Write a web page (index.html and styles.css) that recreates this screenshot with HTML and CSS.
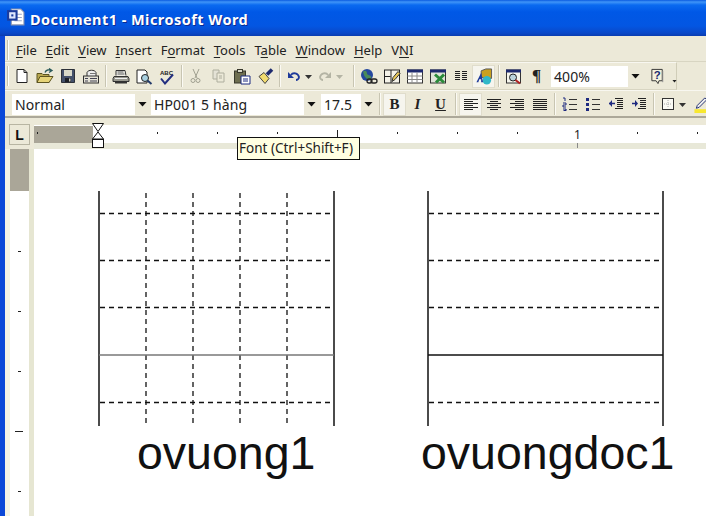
FILE: index.html
```html
<!DOCTYPE html>
<html lang="en">
<head>
<meta charset="utf-8">
<title>Document1 - Microsoft Word</title>
<link rel="stylesheet" href="styles.css">
</head>
<body>
<div class="window">
  <header class="titlebar">
    <svg class="appicon" viewBox="0 0 18 18"><path d="M5 1h9l3 3v12H5z" fill="#fff" stroke="#8a94b0"/><path d="M8 6h7M8 9h7M8 12h7" stroke="#9aa6c8"/><rect x="1" y="2" width="10" height="10" fill="#1c3c9c"/><rect x="3" y="4" width="6" height="6" fill="#dfe8ff"/><rect x="5" y="6" width="2" height="2" fill="#1c3c9c"/></svg>
    <span class="title">Document1 - Microsoft Word</span>
  </header>
  <div class="frame">
    <nav class="menubar">
      <span class="grip"></span>
      <span class="menu"><u>F</u>ile</span>
      <span class="menu"><u>E</u>dit</span>
      <span class="menu"><u>V</u>iew</span>
      <span class="menu"><u>I</u>nsert</span>
      <span class="menu">F<u>o</u>rmat</span>
      <span class="menu"><u>T</u>ools</span>
      <span class="menu">T<u>a</u>ble</span>
      <span class="menu"><u>W</u>indow</span>
      <span class="menu"><u>H</u>elp</span>
      <span class="menu">V<u>N</u>I</span>
    </nav>
    <div class="toolbar standard">
      <span class="grip"></span>
      <span class="btn"><svg class="ico" viewBox="0 0 16 16"><path d="M3 1.500h7l3 3v10H3z" fill="#fff" stroke="#222"/><path d="M10 1.500v3h3" fill="none" stroke="#222"/></svg></span>
      <span class="btn"><svg class="ico wide" viewBox="0 0 18 16"><path d="M1 14V5h5l1 1h6v8z" fill="#b8a850" stroke="#5c5420"/><path d="M1 14l3-6h13l-4 6z" fill="#e6d478" stroke="#5c5420"/><path d="M9 4c1-3 4-3 6-2M13 0l3 2-3 2" fill="none" stroke="#2a5a5a" stroke-width="1.300"/></svg></span>
      <span class="btn"><svg class="ico" viewBox="0 0 16 16"><path d="M1.500 1.500h13v13h-13z" fill="#43506a" stroke="#2c3038"/><rect x="4" y="2" width="8" height="6" fill="#d8d8c8"/><rect x="5" y="10" width="6" height="4" fill="#1c2028"/><rect x="9" y="10.500" width="1.500" height="3" fill="#c8c8b8"/></svg></span>
      <span class="btn"><svg class="ico wide" viewBox="0 0 18 16"><path d="M5 8V4c1-3 8-3 9 0v4" fill="#eee" stroke="#333"/><path d="M8 5h6" stroke="#777"/><rect x="1.500" y="7.500" width="15" height="7" fill="#e4e2d6" stroke="#333"/><path d="M3 10h3M3 12.500h3M8 10h7M8 12.500h7" stroke="#445"/></svg></span>
      <span class="sep"></span>
      <span class="btn"><svg class="ico wide" viewBox="0 0 18 16"><path d="M4 7V2h9l1 5" fill="#f4f4ee" stroke="#333"/><path d="M5.500 3.500h6M5.500 5.500h7" stroke="#555"/><path d="M2 8h14l1 2v3H1v-3z" fill="#9a9a90" stroke="#333"/><path d="M3 14h12" stroke="#333" stroke-width="2"/><path d="M3 10h12" stroke="#eee"/></svg></span>
      <span class="btn"><svg class="ico wide" viewBox="0 0 18 16"><path d="M2 1.500h8l2 2v11H2z" fill="#fff" stroke="#222"/><circle cx="10" cy="9.500" r="3.500" fill="#a8d0e0" stroke="#222"/><path d="M12.500 12l4 3.500" stroke="#233a6a" stroke-width="2"/></svg></span>
      <span class="btn"><svg class="ico wide" viewBox="0 0 18 16"><text class="abc" x="2" y="6">ABC</text><path d="M3 10l4 5 8-9" fill="none" stroke="#232f80" stroke-width="2"/></svg></span>
      <span class="sep tight"></span>
      <span class="btn"><svg class="ico" viewBox="0 0 16 16"><path d="M5 1l4 9M11 1l-4 9" stroke="#a0a090" fill="none"/><circle cx="5" cy="12.500" r="2" fill="none" stroke="#a0a090"/><circle cx="10" cy="12.500" r="2" fill="none" stroke="#a0a090"/></svg></span>
      <span class="btn"><svg class="ico" viewBox="0 0 16 16"><path d="M2 2h6v9H2z" fill="#e4e2d6" stroke="#aeae9e"/><path d="M6 5h7v9H6z" fill="#ece9d8" stroke="#aeae9e"/><path d="M8 8h3M8 10h3" stroke="#aeae9e"/></svg></span>
      <span class="btn"><svg class="ico wide" viewBox="0 0 18 16"><rect x="1.500" y="2.500" width="11" height="12" fill="#6e6e50" stroke="#38382c"/><rect x="4.500" y="1" width="5" height="3" fill="#d8d8c8" stroke="#38382c"/><path d="M8 7.500h9v8H8z" fill="#fff" stroke="#1a2a80"/><path d="M10 10.500h5M10 12.500h5" stroke="#1a2a80"/></svg></span>
      <span class="btn"><svg class="ico wide" viewBox="0 0 18 16"><path d="M3 8l5-4 5 6-4 5z" fill="#f2dc70" stroke="#444"/><path d="M11 6l5-5" stroke="#1d2a6e" stroke-width="3.500"/></svg></span>
      <span class="sep"></span>
      <span class="btn slim"><svg class="ico" viewBox="0 0 16 16"><path d="M5 7C7 4 12 5 13 9c0 2-2 3-3 3" fill="none" stroke="#1e3a9a" stroke-width="1.800"/><path d="M2 4v6h6z" fill="#1e3a9a"/></svg></span>
      <span class="dd undo-dd"></span>
      <span class="btn slim"><svg class="ico" viewBox="0 0 16 16"><path d="M11 7C9 4 4 5 3 9c0 2 2 3 3 3" fill="none" stroke="#b4b4a4" stroke-width="1.800"/><path d="M14 4v6H8z" fill="#b4b4a4"/></svg></span>
      <span class="dd off"></span>
      <span class="sep"></span>
      <span class="btn"><svg class="ico wide" viewBox="0 0 18 16"><circle cx="7" cy="6.500" r="6" fill="#24489e"/><path d="M3 3c3-2 4 0 4 2s3 1 4 3-2 4-3 3-4-2-5-8z" fill="#4a8a5a"/><rect x="7" y="10.500" width="5" height="4" rx="2" fill="none" stroke="#222" stroke-width="1.300"/><rect x="11" y="10.500" width="6" height="4" rx="2" fill="none" stroke="#222" stroke-width="1.300"/></svg></span>
      <span class="btn"><svg class="ico wide" viewBox="0 0 18 16"><rect x="1.500" y="1.500" width="15" height="13" fill="#f4f2e8" stroke="#222"/><path d="M8 1.500v13M1.500 8h6" stroke="#222"/><path d="M9 13l1-4 5-6 2 2-5 6z" fill="#e8c858" stroke="#333"/></svg></span>
      <span class="btn"><svg class="ico wide" viewBox="0 0 18 16"><rect x="1.500" y="1.500" width="15" height="13" fill="#fff" stroke="#333"/><rect x="1" y="1" width="16" height="3" fill="#1e2a70"/><path d="M1.500 7.500h15M1.500 11h15M6 4v10M11 4v10" stroke="#8a8a8a"/></svg></span>
      <span class="btn"><svg class="ico wide" viewBox="0 0 18 16"><rect x="1.500" y="1.500" width="15" height="13" fill="#dfe4d8" stroke="#333"/><rect x="1" y="1" width="16" height="3" fill="#1e2a70"/><path d="M6 6l9 8M15 6l-8 8" stroke="#2a8a3a" stroke-width="3"/></svg></span>
      <span class="btn"><svg class="ico" viewBox="0 0 16 16"><path d="M2 3.500h5M2 5.500h5M2 7.500h5M2 9.500h5M2 11.500h5M9 3.500h5M9 5.500h5M9 7.500h5M9 9.500h5M9 11.500h5" stroke="#222"/></svg></span>
      <span class="btn active"><svg class="ico wide" viewBox="0 0 18 18"><path d="M6 3l5-2h6v10h-8l-3-2z" fill="#c8a020" stroke="#555"/><circle cx="12" cy="13" r="4.500" fill="#30b8c8"/><path d="M1 15L6 5l2 10H6v-3H4l-1 3z" fill="#1e3a9a"/></svg></span>
      <span class="sep"></span>
      <span class="btn"><svg class="ico wide" viewBox="0 0 18 16"><rect x="1.500" y="1.500" width="14" height="13" fill="#f4f4ec" stroke="#333"/><rect x="1" y="1" width="15" height="3" fill="#1e2a70"/><circle cx="8" cy="9" r="3.500" fill="#bcd4dc" stroke="#222"/><path d="M10.500 11.500l4.500 3.500" stroke="#b02020" stroke-width="2"/></svg></span>
      <span class="btn"><span class="pilcrow">¶</span></span>
      <span class="combo zoom"><span class="combo-text">400%</span><span class="arrow"></span></span>
      <span class="btn help-btn"><svg class="ico wide" viewBox="0 0 18 18"><path d="M2.500 1.500h11v12H10l-1 3-2-3H2.500z" fill="#f4f2de" stroke="#333"/><path d="M14 3v12" stroke="#888"/><text class="q" x="4.500" y="11.500">?</text></svg></span>
      <span class="chevron"></span>
    </div>
    <div class="toolbar formatting">
      <span class="combo style"><span class="combo-text">Normal</span><span class="arrow"></span></span>
      <span class="combo font"><span class="combo-text">HP001 5 hàng</span><span class="arrow"></span></span>
      <span class="combo size"><span class="combo-text">17.5</span><span class="arrow"></span></span>
      <span class="sep"></span>
      <span class="btn active fmt bold">B</span>
      <span class="btn fmt italic">I</span>
      <span class="btn fmt under">U</span>
      <span class="sep"></span>
      <span class="btn active"><svg class="ico" viewBox="0 0 16 16"><path d="M1 3.500h14M1 5.500h9M1 7.500h14M1 9.500h9M1 11.500h14M1 13.500h9" stroke="#222"/></svg></span>
      <span class="btn"><svg class="ico" viewBox="0 0 16 16"><path d="M1 3.500h14M4 5.500h8M1 7.500h14M4 9.500h8M1 11.500h14M4 13.500h8" stroke="#222"/></svg></span>
      <span class="btn"><svg class="ico" viewBox="0 0 16 16"><path d="M1 3.500h14M6 5.500h9M1 7.500h14M6 9.500h9M1 11.500h14M6 13.500h9" stroke="#222"/></svg></span>
      <span class="btn"><svg class="ico" viewBox="0 0 16 16"><path d="M1 3.500h14M1 5.500h14M1 7.500h14M1 9.500h14M1 11.500h14M1 13.500h14" stroke="#222"/></svg></span>
      <span class="sep"></span>
      <span class="btn"><svg class="ico" viewBox="0 0 16 16"><path d="M1 2h2v3M1 7h3v2H1v2h3M1 13h3v1.500H1.500M4 14.500v-1" fill="none" stroke="#1e2a80"/><path d="M7 3.500h8M7 8.500h8M7 13.500h8" stroke="#333"/></svg></span>
      <span class="btn"><svg class="ico" viewBox="0 0 16 16"><path d="M1 2h3v3H1zM1 7h3v3H1zM1 12h3v3H1z" fill="#1e2a80"/><path d="M7 3.500h8M7 8.500h8M7 13.500h8" stroke="#333"/></svg></span>
      <span class="btn"><svg class="ico" viewBox="0 0 16 16"><path d="M7 2.500h8M9 4.500h6M9 6.500h6M9 8.500h6M9 10.500h6M7 12.500h8" stroke="#222"/><path d="M1 7.500h6" stroke="#1e2a80" stroke-width="1.500"/><path d="M4 4L1 7.500 4 11z" fill="#1e2a80"/></svg></span>
      <span class="btn"><svg class="ico" viewBox="0 0 16 16"><path d="M7 2.500h8M9 4.500h6M9 6.500h6M9 8.500h6M9 10.500h6M7 12.500h8" stroke="#222"/><path d="M1 7.500h5" stroke="#1e2a80" stroke-width="1.500"/><path d="M4 4l3 3.500L4 11z" fill="#1e2a80"/></svg></span>
      <span class="sep"></span>
      <span class="btn slim"><svg class="ico" viewBox="0 0 16 16"><rect x="2.500" y="2.500" width="11" height="11" fill="#fafaf4" stroke="#333"/><path d="M8 4v8M4 8h8" stroke="#aaa" stroke-dasharray="1 1"/></svg></span>
      <span class="dd"></span>
      <span class="btn"><svg class="ico wide" viewBox="0 0 18 18"><path d="M4 10l8-8 2 2-8 8-3 1z" fill="#eee" stroke="#1e2a70"/><rect x="1" y="14" width="16" height="4" fill="#f8e830"/></svg></span>
    </div>
    <div class="gap"></div>
    <div class="ruler-row">
      <div class="tab-stop"><span>L</span></div>
      <svg class="hruler" viewBox="0 0 672 26" width="672" height="26">
        <rect x="0" y="2" width="672" height="18" fill="#fff"/>
        <rect x="0" y="3" width="59" height="17" fill="#aaa698"/>
        <rect x="0" y="20" width="672" height="6" fill="#e8e8d8"/>
        <path d="M3.500 9v2M123.500 9v2M183.500 9v2M243.500 9v2M303.500 7v7M363.500 9v2M423.500 9v2M483.500 9v2M603.500 9v2M663.500 9v2" stroke="#222"/>
        <path d="M543.500 20v5" stroke="#888"/>
        <text class="ruler-num" x="543.500" y="16">1</text>
        <path d="M58.500 .500h11l-5.500 8z" fill="#fff" stroke="#111"/>
        <path d="M64 9l5.500 7h-11z" fill="#fff" stroke="#111"/>
        <rect x="58.500" y="16.500" width="11" height="8" fill="#fff" stroke="#111"/>
      </svg>
      <div class="tooltip">Font (Ctrl+Shift+F)</div>
    </div>
    <div class="workspace">
      <div class="vruler">
        <div class="vthumb"></div>
        <svg class="vticks" viewBox="0 0 19 330" width="19" height="330">
          <path d="M8 60.500h3M8 120.500h3M8 180.500h3M5 240.500h8M8 300.500h3" stroke="#222"/>
        </svg>
      </div>
      <main class="page">
        <figure class="figure first">
          <svg class="grid" viewBox="0 0 238 236" width="238" height="236">
            <path class="solid" d="M1 0v235M236 0v235"/>
            <path class="dash" d="M48 2v233M95 2v233M142 2v233M189 2v233"/>
            <path class="dash" d="M2 22.500h234M2 69.500h234M2 116.500h234M2 211.500h234"/>
            <path class="mid-grey" d="M1 164h235"/>
          </svg>
          <figcaption class="caption">ovuong1</figcaption>
        </figure>
        <figure class="figure second">
          <svg class="grid" viewBox="0 0 238 236" width="238" height="236">
            <path class="solid" d="M1 0v235M236 0v235"/>
            <path class="dash" d="M2 22.500h234M2 69.500h234M2 116.500h234M2 211.500h234"/>
            <path class="mid-black" d="M1 164h235"/>
          </svg>
          <figcaption class="caption">ovuongdoc1</figcaption>
        </figure>
      </main>
    </div>
  </div>
</div>
</body>
</html>
```
FILE: styles.css
```css
* { box-sizing: border-box; }
html, body { margin: 0; padding: 0; }
body { width: 706px; height: 516px; overflow: hidden; font-family: "Noto Sans", "DejaVu Sans", sans-serif; }
.window { width: 706px; height: 516px; display: flex; flex-direction: column; overflow: hidden; background: #ece9d8; }
.titlebar {
  height: 36px; flex: none; display: flex; align-items: center; padding: 2px 0 0 6px; gap: 5px;
  background: linear-gradient(#0a5be0 0, #3f95f8 2px, #0a6af0 5px, #0058e6 12px, #0356e2 26px, #0a48c8 33px, #0a3cb0 36px);
}
.appicon { width: 19px; height: 19px; margin-top: -3px; }
.title { color: #fff; font-size: 14.500px; font-weight: 700; letter-spacing: .45px; text-shadow: 1px 1px 0 #0a2a90; white-space: nowrap; }
.frame { flex: 1; min-height: 0; display: flex; flex-direction: column; border-left: 5px solid #0b48d8; }
.grip { width: 2px; height: 20px; margin: 0 6px 0 2px; background: #c4c1ae; border-right: 1px solid #fff; flex: none; }
.menubar { height: 26px; flex: none; display: flex; align-items: center; padding-top: 2px; border-bottom: 1px solid #d8d5c2; font-size: 13px; color: #222; }
.menubar .grip { margin-right: 5px; }
.menu { padding: 0 7px 0 2px; white-space: nowrap; }
.menu u { text-underline-offset: 2px; }
.toolbar { flex: none; display: flex; align-items: center; border-bottom: 1px solid #d8d5c2; border-top: 1px solid #f8f7f0; }
.standard { height: 28px; width: 672px; border-right: 1px solid #d0cdb8; }
.standard .grip { margin-right: 1px; }
.formatting { height: 28px; padding-left: 7px; padding-top: 1px; border-bottom: 2px solid #aca899; }
.btn { width: 23px; height: 23px; flex: none; display: flex; align-items: center; justify-content: center; }
.btn.slim { width: 22px; }
.btn.active { background: #f6f5ee; box-shadow: inset 0 0 0 1px #e0ddcc; }
.ico { width: 16px; height: 16px; display: block; }
.ico.wide { width: 18px; height: 17px; }
.sep { width: 1px; height: 22px; margin: 0 3px; background: #c8c5b2; box-shadow: 1px 0 0 #fbfaf4; flex: none; }
.sep.tight { margin-right: 2px; }
.abc { font: 700 6px "Liberation Sans", sans-serif; fill: #222; }
.q { font: 700 12px "Liberation Sans", sans-serif; fill: #1a2a70; }
.ruler-num { font: 12px "Noto Sans", sans-serif; fill: #222; text-anchor: middle; }
.dd { width: 7px; height: 4px; flex: none; margin: 2px 4px 0 0; background: #333; clip-path: polygon(0 0, 100% 0, 50% 100%); }
.dd.undo-dd { margin-right: 2px; }
.dd.off { background: #b4b4a4; margin-right: 7px; }
.pilcrow { font: 700 17px "Liberation Serif", serif; color: #222; }
.combo { height: 21px; flex: none; display: flex; align-items: center; justify-content: space-between; background: #fff; font-size: 14px; color: #222; }
.combo-text { padding-left: 3px; white-space: nowrap; letter-spacing: .1px; }
.arrow { width: 15px; height: 100%; background: #ece9d8; display: flex; align-items: center; justify-content: center; }
.arrow::after { content: ""; width: 9px; height: 5px; background: #111; clip-path: polygon(0 0, 100% 0, 50% 100%); }
.style { width: 138px; margin-right: 1px; }
.font { width: 168px; margin-right: 2px; }
.size { width: 55px; }
.zoom { width: 92px; margin: 0 3px; }
.chevron { width: 5px; height: 3px; flex: none; margin: 10px 0 0 3px; background: #222; clip-path: polygon(0 0, 100% 0, 50% 100%); }
.fmt { font-family: "Liberation Serif", serif; font-size: 15px; color: #222; font-weight: 700; }
.italic { font-style: italic; }
.under { text-decoration: underline; }
.gap { height: 5px; flex: none; background: #ece9d8; }
.ruler-row { position: relative; height: 26px; flex: none; display: flex; align-items: flex-start; padding-left: 4px; z-index: 2; }
.tab-stop { width: 21px; height: 21px; flex: none; margin-top: 1px; border: 1px solid #b8b5a2; background: #ece9d8; display: flex; align-items: center; justify-content: center; font: 700 14px "Liberation Sans", sans-serif; color: #111; }
.hruler { flex: none; margin-left: 4px; }
.tooltip { position: absolute; left: 232px; top: 14px; width: 123px; height: 23px; background: #ffffe1; border: 1px solid #111; font-size: 13.500px; line-height: 21px; padding-left: 1px; color: #222; white-space: nowrap; overflow: hidden; }
.workspace { flex: 1; min-height: 0; display: flex; }
.vruler { width: 29px; flex: none; padding-left: 5px; background: linear-gradient(90deg, #f4f3e6 5px, #fff 5px); border-right: 5px solid #e6e6d2; }
.vthumb { width: 19px; height: 42px; background: #aaa698; }
.vticks { display: block; }
.page { flex: 1; min-width: 0; background: #fff; display: flex; align-items: flex-start; padding: 42px 0 0 64px; }
.figure { margin: 0; flex: none; width: 329px; }
.grid { display: block; fill: none; }
.solid { stroke: #111; stroke-width: 1.500px; }
.dash { stroke: #111; stroke-width: 1.300px; stroke-dasharray: 5 4; }
.mid-grey { stroke: #777; stroke-width: 1.500px; }
.mid-black { stroke: #111; stroke-width: 1.500px; }
.caption { font: 46.500px/52px "Liberation Sans", sans-serif; color: #111; white-space: nowrap; }
.first .caption { padding-left: 39px; }
.second .caption { margin-left: -6px; }
```
